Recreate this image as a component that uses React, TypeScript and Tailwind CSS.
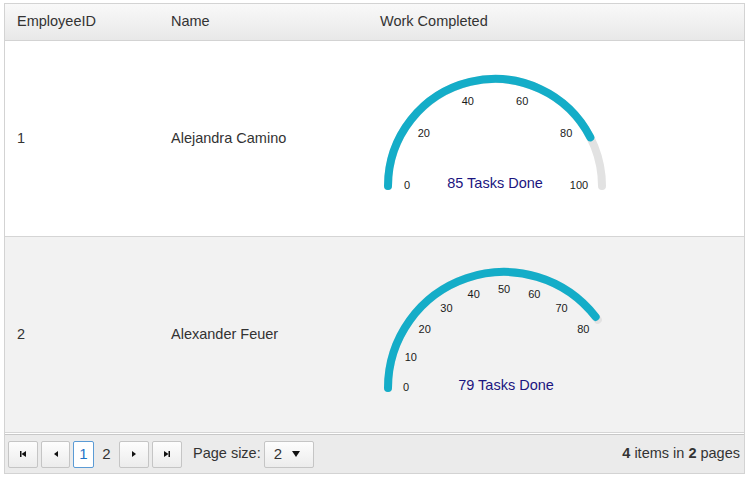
import React from "react";

type Gauge = {
  cx: number;
  cy: number;
  r: number;
  labelR: number;
  max: number;
  span: number;
  value: number;
  step: number;
  textX: number;
  textY: number;
};

const employees = [
  {
    id: 1,
    name: "Alejandra Camino",
    gauge: { cx: 127, cy: 145, r: 107, labelR: 88, max: 100, span: 180, value: 85, step: 20, textX: 127, textY: 143 },
  },
  {
    id: 2,
    name: "Alexander Feuer",
    gauge: { cx: 136, cy: 151, r: 116, labelR: 98, max: 80, span: 144, value: 79, step: 10, textX: 138, textY: 149 },
  },
];

// angle measured from the left end, clockwise over the top
function pt(g: Gauge, v: number, r: number) {
  const a = ((v / g.max) * g.span * Math.PI) / 180;
  return { x: g.cx - r * Math.cos(a), y: g.cy - r * Math.sin(a) };
}

function arc(g: Gauge, from: number, to: number) {
  const s = pt(g, from, g.r);
  const e = pt(g, to, g.r);
  return `M ${s.x} ${s.y} A ${g.r} ${g.r} 0 0 1 ${e.x} ${e.y}`;
}

function GaugeChart({ g }: { g: Gauge }) {
  const ticks: number[] = [];
  for (let v = 0; v <= g.max; v += g.step) ticks.push(v);
  return (
    <svg width="260" height="195" className="block">
      <path d={arc(g, 0, g.max)} fill="none" stroke="#e2e2e2" strokeWidth="8" strokeLinecap="round" />
      <path d={arc(g, 0, g.value)} fill="none" stroke="#14adc8" strokeWidth="8" strokeLinecap="round" />
      {ticks.map((v) => {
        const p = pt(g, v, g.labelR);
        return (
          <text
            key={v}
            x={v === 100 ? p.x - 4 : p.x}
            y={p.y}
            textAnchor="middle"
            dominantBaseline="middle"
            fontSize="11"
            fill="#1a1a1a"
            fontFamily="'Liberation Sans', Arial, sans-serif"
          >
            {v}
          </text>
        );
      })}
      <text
        x={g.textX}
        y={g.textY}
        textAnchor="middle"
        dominantBaseline="middle"
        fontSize="14.5"
        fill="#1b1580"
        fontFamily="'Liberation Sans', Arial, sans-serif"
      >
        {g.value} Tasks Done
      </text>
    </svg>
  );
}

function PagerButton({ children }: { children: React.ReactNode }) {
  return (
    <button className="w-[30px] h-[27px] flex items-center justify-center rounded-[2px] border border-[#c5c5c5] bg-linear-to-b from-[#fdfdfd] to-[#ececec]">
      {children}
    </button>
  );
}

export default function App() {
  return (
    <div className="w-[750px] h-[480px] bg-white pt-[3px] pl-[4px] font-['Liberation_Sans',Arial,sans-serif] text-[14.5px] text-[#333]">
      <div className="w-[741px] border border-[#d3d3d3]">
        {/* Header */}
        <div className="flex h-[37px] items-center border-b border-[#d3d3d3] bg-linear-to-b from-[#f9f9f9] to-[#e8e8e8]">
          <div className="w-[154px] pl-[12px]">EmployeeID</div>
          <div className="w-[209px] pl-[12px]">Name</div>
          <div className="flex-1 pl-[12px]">Work Completed</div>
        </div>

        {employees.map((e, i) => (
          <div
            key={e.id}
            className={`flex h-[196px] items-center border-b border-[#d5d5d5] ${i % 2 ? "bg-[#f2f2f2]" : "bg-white"}`}
          >
            <div className="w-[154px] pl-[12px]">{e.id}</div>
            <div className="w-[209px] pl-[12px]">{e.name}</div>
            <div className="flex-1">
              <GaugeChart g={e.gauge} />
            </div>
          </div>
        ))}

        {/* Pager */}
        <div className="mt-[1px] flex h-[39px] items-center border-t border-[#c8c8c8] bg-[#ebebeb] pl-[3px] pr-[4px]">
          <div className="flex items-center gap-[3px]">
            <PagerButton>
              <svg width="8" height="8" viewBox="0 0 8 8">
                <rect x="1" y="1" width="1.5" height="6" fill="#111" />
                <path d="M7 1 L2.5 4 L7 7 Z" fill="#111" />
              </svg>
            </PagerButton>
            <div className="w-[29px] h-[27px] flex items-center justify-center rounded-[2px] border border-[#c5c5c5] bg-linear-to-b from-[#fdfdfd] to-[#ececec]">
              <svg width="8" height="8" viewBox="0 0 8 8">
                <path d="M6 1 L2 4 L6 7 Z" fill="#111" />
              </svg>
            </div>
            <div className="w-[21px] h-[27px] flex items-center justify-center rounded-[2px] border border-[#5b9bd5] bg-white text-[15px] text-[#1e73c9]">
              1
            </div>
            <div className="w-[19px] h-[27px] flex items-center justify-center text-[15px]">2</div>
            <PagerButton>
              <svg width="8" height="8" viewBox="0 0 8 8">
                <path d="M2 1 L6 4 L2 7 Z" fill="#111" />
              </svg>
            </PagerButton>
            <PagerButton>
              <svg width="8" height="8" viewBox="0 0 8 8">
                <path d="M1 1 L5.5 4 L1 7 Z" fill="#111" />
                <rect x="5.5" y="1" width="1.5" height="6" fill="#111" />
              </svg>
            </PagerButton>
          </div>
          <span className="ml-[11px]">Page size:</span>
          <div className="ml-[3px] w-[50px] h-[27px] flex items-center justify-between rounded-[2px] border border-[#c5c5c5] bg-linear-to-b from-[#fdfdfd] to-[#ececec] pl-[9px] pr-[13px] text-[15px]">
            <span>2</span>
            <svg width="8" height="6" viewBox="0 0 8 6">
              <path d="M0 0 L8 0 L4 6 Z" fill="#111" />
            </svg>
          </div>
          <div className="ml-auto">
            <b>4</b> items in <b>2</b> pages
          </div>
        </div>
      </div>
    </div>
  );
}
